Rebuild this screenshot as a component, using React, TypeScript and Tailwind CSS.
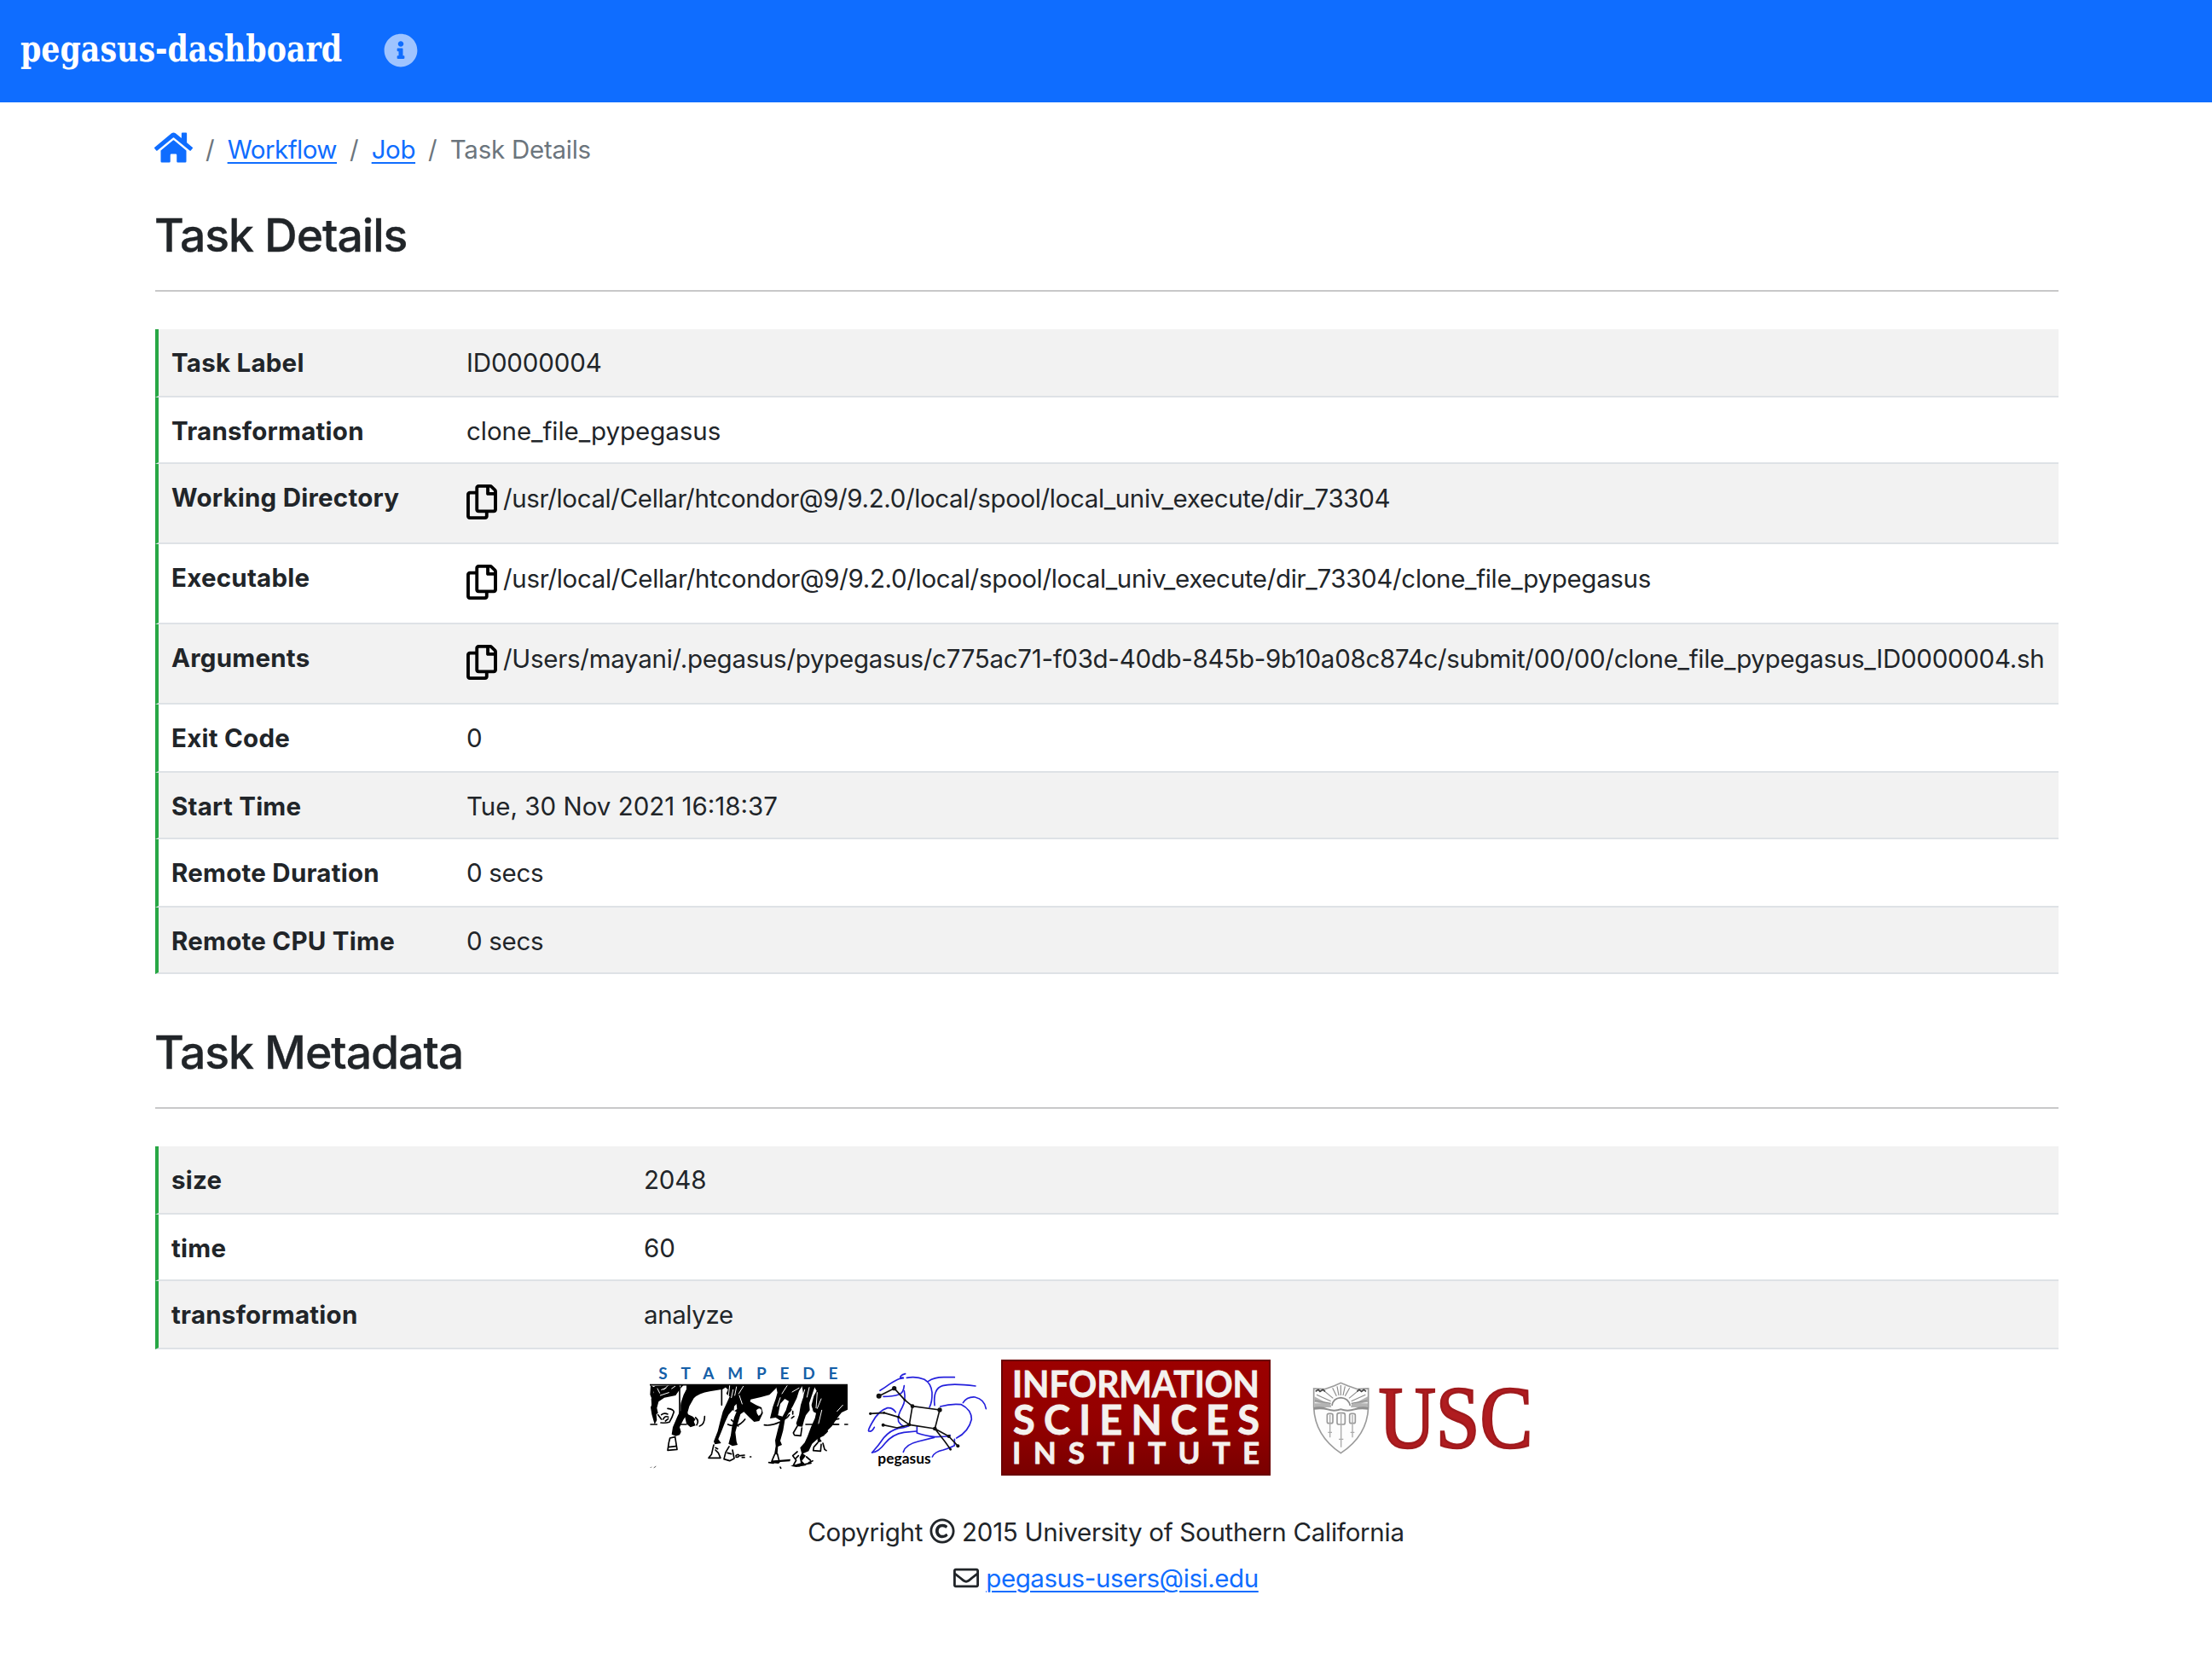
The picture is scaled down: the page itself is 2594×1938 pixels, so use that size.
import React from "react";
import { FaHome, FaInfoCircle, FaRegCopy, FaRegCopyright, FaRegEnvelope } from "react-icons/fa";

type Row = { label: string; value: string; height: string; tracking?: string; copy?: boolean };

const details: Row[] = [
  { label: "Task Label", value: "ID0000004", height: "h-[80px]" },
  { label: "Transformation", value: "clone_file_pypegasus", height: "h-[78px]", tracking: "tracking-[-0.05px]" },
  {
    label: "Working Directory",
    value: "/usr/local/Cellar/htcondor@9/9.2.0/local/spool/local_univ_execute/dir_73304",
    height: "h-[94px]",
    tracking: "tracking-[-0.37px]",
    copy: true,
  },
  {
    label: "Executable",
    value: "/usr/local/Cellar/htcondor@9/9.2.0/local/spool/local_univ_execute/dir_73304/clone_file_pypegasus",
    height: "h-[94px]",
    tracking: "tracking-[-0.33px]",
    copy: true,
  },
  {
    label: "Arguments",
    value:
      "/Users/mayani/.pegasus/pypegasus/c775ac71-f03d-40db-845b-9b10a08c874c/submit/00/00/clone_file_pypegasus_ID0000004.sh",
    height: "h-[94px]",
    tracking: "tracking-[-0.285px]",
    copy: true,
  },
  { label: "Exit Code", value: "0", height: "h-[80px]" },
  { label: "Start Time", value: "Tue, 30 Nov 2021 16:18:37", height: "h-[78px]", tracking: "tracking-[0px]" },
  { label: "Remote Duration", value: "0 secs", height: "h-[80px]", tracking: "tracking-[-0.3px]" },
  { label: "Remote CPU Time", value: "0 secs", height: "h-[78px]", tracking: "tracking-[-0.3px]" },
];

const metadata: Row[] = [
  { label: "size", value: "2048", height: "h-[80px]" },
  { label: "time", value: "60", height: "h-[78px]" },
  { label: "transformation", value: "analyze", height: "h-[80px]", tracking: "tracking-[-0.4px]" },
];

function Table({ rows, labelWidth }: { rows: Row[]; labelWidth: string }) {
  return (
    <div>
      {rows.map((row) => (
        <div key={row.label} className={`flex odd:bg-[#f2f2f2] ${row.height}`}>
          <div
            className={`shrink-0 border-b-2 border-l-4 border-b-[#dee2e6] border-l-[#28a745] pt-[17px] pl-[15px] font-bold tracking-[0.24px] whitespace-nowrap ${labelWidth}`}
          >
            {row.label}
          </div>
          <div className="flex grow items-start border-b-2 border-[#dee2e6] pt-[17px] whitespace-nowrap">
            {row.copy && <FaRegCopy className="mt-[7px] mr-[7px] h-[41px] w-[36px] shrink-0 text-black" />}
            <span className={`${row.copy ? "pt-px" : ""} ${row.tracking ?? "tracking-[-0.15px]"}`}>{row.value}</span>
          </div>
        </div>
      ))}
    </div>
  );
}

function SectionTitle({ children }: { children: React.ReactNode }) {
  return (
    <h2 className="-indent-px h-[105px] border-b-2 border-[#c8c8c9] pt-[7px] text-[53.6px] leading-[64px] font-medium tracking-[-1.1px] [-webkit-text-stroke:0.3px_#212529]">
      {children}
    </h2>
  );
}

function StampedeLogo() {
  return (
    <svg viewBox="0 0 750 435" className="h-[145px] w-[250px] shrink-0">
      <g fill="#1560a8" fontFamily="Lato, sans-serif" fontWeight="700" fontSize="57">
        <text x="52" y="80" textLength="630" lengthAdjust="spacing">STAMPEDE</text>
      </g>
      <path d="M21 101H717" stroke="#000" strokeWidth="5" />
      <g fill="#000">
        <path d="M24 102L40 112L34 128L44 150L33 165L44 205L46 225L38 240L28 205L24 180L32 160L22 135Z" />
        <path d="M40 105L140 101L126 118L112 138L72 146L52 160L46 182L50 200L38 208L28 184L26 150L36 125L30 112Z" />
        <path d="M150 101H300L278 116L232 124Q194 130 176 148L160 176L152 205L140 222L126 250L131 266L126 277L112 281L98 275L102 250L118 212L126 196L130 165L140 136L150 116Z" />
        <path d="M146 178L156 205L172 212L182 222L176 230L182 244L164 250L150 238L144 210Z" />
        <path d="M284 101H474L462 116L442 136L412 144L376 152L374 160L395 172L414 180L419 200L406 228L388 231L372 216L352 196L340 204L330 238L322 268L326 300L330 312L312 316L298 308L306 278L310 250L318 215L326 196L312 190L298 206L286 232L272 268L262 292L272 306L250 310L246 300L260 264L268 232L278 194L294 160L302 142L290 132L296 118L288 110Z" />
        <path d="M464 101H560L546 122L538 148L524 176L506 206L496 226L490 262L480 298L486 312L472 318L470 346L459 346L464 316L462 296L472 256L480 226L464 216L444 219L454 178L464 150L470 128Z" />
        <path d="M556 101H604L594 130L582 165L584 190L570 208L564 225L558 248L540 246L536 236L546 206L552 172L562 140Z" />
        <path d="M596 101H717V188L696 198L680 218L662 246L646 262L634 280L612 290L592 308L580 334L556 344L550 322L566 304L576 282L588 250L602 218L606 200L594 194L590 172L598 140L608 122Z" />
        <path d="M636 236L628 262L620 290L626 300L612 304L610 284L622 258Z" />
        <path d="M556 340L570 350L556 368L572 384L536 390L516 386L552 376L548 356Z" />
        <path d="M436 374L470 366L516 362L514 370L480 372L474 378Z" />
      </g>
      <g fill="none" stroke="#fff" strokeWidth="3" strokeLinecap="round">
        <path d="M128 104V192M58 138l30 -10M62 118l16-6M48 114l8 16M84 104l-14 14M110 106l-12 8" />
        <path d="M302 104l-4 34M314 118l-6 28M326 108l-6 30M350 106l-16 26M336 138l10 30" />
        <path d="M566 118l-10 34M582 110l-8 34M546 112l-24 14M610 128l-4 54M624 150l-14 34M700 172l-20 22" />
        <path d="M480 146l-10 30M504 104l-18 28M626 190l-12 50M590 180l10 30" />
      </g>
      <g fill="#fff">
        <path d="M472 208L480 168L496 150L510 158L500 190L488 212Z" />
        <path d="M396 190Q408 178 414 190Q416 204 404 210Q396 202 396 190Z" />
        <path d="M318 176L326 168L328 186L316 194Z" />
      </g>
      <g fill="none" stroke="#000" strokeWidth="5" strokeLinejoin="round" strokeLinecap="round">
        <path d="M92 288L110 284L117 328L84 331L88 304ZM86 320l26-3" />
        <path d="M24 240H46M126 240H150M570 240H618M646 240H684M707 240H717" />
        <path d="M84 184Q104 186 106 196Q100 216 90 232Q78 236 60 234M62 206Q72 198 84 204M68 222Q74 208 86 214M76 228l10-8M50 206l12 16" />
        <path d="M214 212Q214 240 196 246M182 216Q196 228 186 242M126 110V236M274 112V172" />
        <path d="M246 312L238 346L228 358H270L262 340L252 330M252 322l8 4" />
        <path d="M300 318L288 338L282 362L302 368L318 360L312 330M294 340l14 4" />
        <path d="M324 350q8-8 12 0q-4 8-12 4M340 350l14-2M346 356h8M374 354h3M296 240Q306 246 326 244Q342 240 356 222M308 224L332 246" />
        <path d="M424 242Q450 246 478 232M478 222Q500 226 512 206M512 196l6-8M524 194v10M520 218l8-6M512 148l12 4" />
        <path d="M460 346L450 370L476 368L470 344M480 390l2 4M440 374l16 2" />
        <path d="M540 246L526 270L530 278L552 280L556 252" />
        <path d="M540 336L524 350L536 366L526 384L548 386M544 350l-8 8M572 354l14 12M568 380l20-4M580 374l14-6" />
        <path d="M612 304L598 320L596 332L622 334L624 310M630 306l6 22l6 4M638 272l8-8M660 238Q668 222 686 220M668 240l18 0M620 262l18-24" />
        <path d="M24 392l2-2M36 392l6-4" strokeWidth="2" />
      </g>
    </svg>
  );
}

const stars: [number, number, number][] = [
  [62, 110, 9], [116, 83, 8], [180, 146, 7], [276, 159, 8], [259, 225, 7], [169, 211, 6], [131, 184, 5],
  [80, 169, 4], [32, 172, 5], [77, 212, 6], [308, 252, 6], [340, 286, 6], [314, 298, 4], [153, 124, 4],
];

function PegasusLogo() {
  return (
    <svg viewBox="0 0 480 390" className="h-[130px] w-[160px] shrink-0">
      <g fill="none" stroke="#2420dc" strokeWidth="5" strokeLinecap="round" strokeLinejoin="round">
        <path d="M66 91Q84 80 100 68Q122 54 136 49L148 47Q150 44 138 46Q134 38 155 32" />
        <path d="M160 46Q195 40 222 52Q246 66 249 98Q250 130 240 150" />
        <path d="M236 58Q256 44 290 44H328" />
        <path d="M258 143Q252 84 286 74Q320 64 402 75" />
        <path d="M358 134Q372 112 400 114Q434 122 439 155" />
        <path d="M278 147Q316 136 352 140Q388 158 388 192Q378 236 335 258" />
        <path d="M78 112Q110 112 134 104Q148 100 151 74" />
        <path d="M151 92Q158 126 144 150Q126 180 131 200Q140 214 150 217" />
        <path d="M121 167Q110 150 92 152Q60 162 38 204Q20 236 28 234Q38 236 46 220" />
        <path d="M38 309Q60 286 80 256Q104 230 130 224Q150 222 166 216" />
        <path d="M38 309Q60 308 84 276Q110 244 150 238L194 234" />
        <path d="M196 218V240Q222 250 260 254L310 252Q316 244 308 250" />
        <path d="M148 307Q156 280 200 270L256 256" />
        <path d="M250 324Q258 306 288 300Q318 290 328 284V262" />
      </g>
      <g fill="none" stroke="#111" strokeWidth="5" strokeLinejoin="round">
        <path d="M62 110L116 83L153 124L180 146L276 159L259 225L169 211L180 146" />
        <path d="M32 172L80 169L131 184L169 211L126 222L77 212" />
        <path d="M259 225L308 252L340 286M259 225L294 270L314 298" />
      </g>
      {stars.map(([x, y, r]) => (
        <circle key={`${x}-${y}`} cx={x} cy={y} r={r} fill="#111" />
      ))}
      <text x="58" y="347" textLength="187" lengthAdjust="spacing" fill="#000" fontFamily="Lato, sans-serif" fontWeight="700" fontSize="52">
        pegasus
      </text>
    </svg>
  );
}

function IsiLogo() {
  return (
    <svg viewBox="0 0 316 136" className="h-[136px] w-[316px] shrink-0">
      <defs>
        <linearGradient id="isi" x1="0" y1="0" x2="0" y2="1">
          <stop offset="0" stopColor="#9c0000" />
          <stop offset="0.55" stopColor="#930000" />
          <stop offset="1" stopColor="#780000" />
        </linearGradient>
      </defs>
      <rect width="316" height="136" fill="url(#isi)" />
      <rect x="1" y="1" width="314" height="134" fill="none" stroke="#6a0000" strokeWidth="2" />
      <g fill="#f4f1ee" stroke="#f4f1ee" strokeWidth="0.8" fontFamily="Lato, sans-serif" fontWeight="700">
        <text x="13" y="43.500" fontSize="42.500" textLength="290" lengthAdjust="spacingAndGlyphs">INFORMATION</text>
        <text x="14" y="87.500" fontSize="47" textLength="289" lengthAdjust="spacing">SCIENCES</text>
        <text x="13" y="121.500" fontSize="35" textLength="290" lengthAdjust="spacing">INSTITUTE</text>
      </g>
    </svg>
  );
}

function UscLogo() {
  return (
    <svg viewBox="0 0 900 390" className="h-[130px] w-[300px] shrink-0">
      <path d="M62 84L100 86L134 74L157 64L182 74L216 86L254 84V150Q250 250 157 311Q66 250 62 150Z" fill="#fdfdfd" stroke="#9b9b9b" strokeWidth="5" />
      <path d="M64 112L118 140L64 132ZM252 112L198 140L252 132ZM64 136H120L124 150H64ZM252 136H196L192 150H252Z" fill="#b4b4b4" />
      <path d="M62 150Q90 144 110 154Q134 162 157 154Q180 162 206 154Q226 144 254 150V158Q226 154 206 160Q180 168 157 160Q134 168 110 160Q90 154 62 158Z" fill="#8f8f8f" />
      <path d="M126 144Q130 118 157 116Q184 118 190 144" fill="#fff" stroke="#8c8c8c" strokeWidth="5" />
      <path d="M157 108V72M142 110L128 82M172 110L188 82M130 118L98 92M186 118L218 92M122 128L72 106M194 128L244 106M150 108L144 76M165 108L172 76M122 136L66 126M194 136L250 126" stroke="#8c8c8c" strokeWidth="3.500" />
      <path d="M68 94l10-6l6 6l10-6l8 6M214 94l8-6l8 6l8-6l8 6" fill="none" stroke="#444" strokeWidth="5" />
      <g fill="none" stroke="#9a9a9a" strokeWidth="5">
        <rect x="109" y="172" width="20" height="34" rx="6" />
        <rect x="144" y="170" width="28" height="40" rx="7" />
        <rect x="188" y="172" width="20" height="34" rx="6" />
      </g>
      <path d="M119 176V256M112 238h14M198 176V256M191 238h14M158 174V290M150 262h16" stroke="#aaa" strokeWidth="4" />
      <text
        x="290"
        y="290"
        fontSize="308"
        textLength="542"
        lengthAdjust="spacingAndGlyphs"
        fill="#b01c20"
        stroke="#a01a1d"
        strokeWidth="8"
        fontFamily="'Liberation Serif', serif"
      >
        USC
      </text>
    </svg>
  );
}

export default function App() {
  return (
    <div className="min-h-[1938px] bg-white font-['Inter',sans-serif] text-[29.5px] leading-[44px] text-[#212529]">
      <header className="flex h-[120px] items-start bg-[#0f6dff] pl-[24px]">
        <div className="w-[426px] shrink-0 pt-[28px]">
          <span className="inline-block origin-left scale-x-[0.922] font-['DejaVu_Serif_Condensed','DejaVu_Serif',serif] text-[42px] leading-[60px] font-bold whitespace-nowrap text-white">
            pegasus-dashboard
          </span>
        </div>
        <FaInfoCircle className="mt-[39px] h-[40px] w-[40px] text-white/60" />
      </header>

      <main className="w-[2414px] pl-[182px]">
        <nav className="flex h-[77px] items-start pt-[33px] text-[#6c757d]">
          <FaHome className="-ml-px h-[40px] w-[45px] text-[#0f6dff]" />
          <span className="pl-[15px]">/</span>
          <a href="#" className="ml-[15px] tracking-[-0.5px] text-[#0f6dff] underline decoration-2 underline-offset-[4px]">Workflow</a>
          <span className="pl-[15px]">/</span>
          <a href="#" className="ml-[15px] tracking-[-0.4px] text-[#0f6dff] underline decoration-2 underline-offset-[4px]">Job</a>
          <span className="pl-[15px]">/</span>
          <span className="pl-[15px] tracking-[-0.25px]">Task Details</span>
        </nav>

        <div className="pt-[40px]">
          <SectionTitle>Task Details</SectionTitle>
        </div>
        <div className="pt-[44px]">
          <Table rows={details} labelWidth="w-[365px]" />
        </div>

        <div className="pt-[53px]">
          <SectionTitle>Task Metadata</SectionTitle>
        </div>
        <div className="pt-[44px]">
          <Table rows={metadata} labelWidth="w-[573px]" />
        </div>
      </main>

      <footer>
        <div className="flex h-[192px] items-start pt-[8px] pl-[755px]">
          <StampedeLogo />
          <div className="ml-[5px] pt-[10px]">
            <PegasusLogo />
          </div>
          <div className="ml-[4px] pt-[4px]">
            <IsiLogo />
          </div>
          <div className="ml-[30px] pt-[10px]">
            <UscLogo />
          </div>
        </div>
        <p className="flex items-start justify-center tracking-[-0.27px]">
          Copyright
          <FaRegCopyright className="mx-[8px] mt-[6px] h-[30px] w-[30px]" />
          2015 University of Southern California
        </p>
        <p className="flex items-start justify-center pt-[10px] tracking-[-0.43px]">
          <FaRegEnvelope className="mt-[7px] mr-[8px] h-[30px] w-[30px]" />
          <a href="#" className="text-[#0f6dff] underline decoration-2 underline-offset-[4px]">pegasus-users@isi.edu</a>
        </p>
      </footer>
    </div>
  );
}
